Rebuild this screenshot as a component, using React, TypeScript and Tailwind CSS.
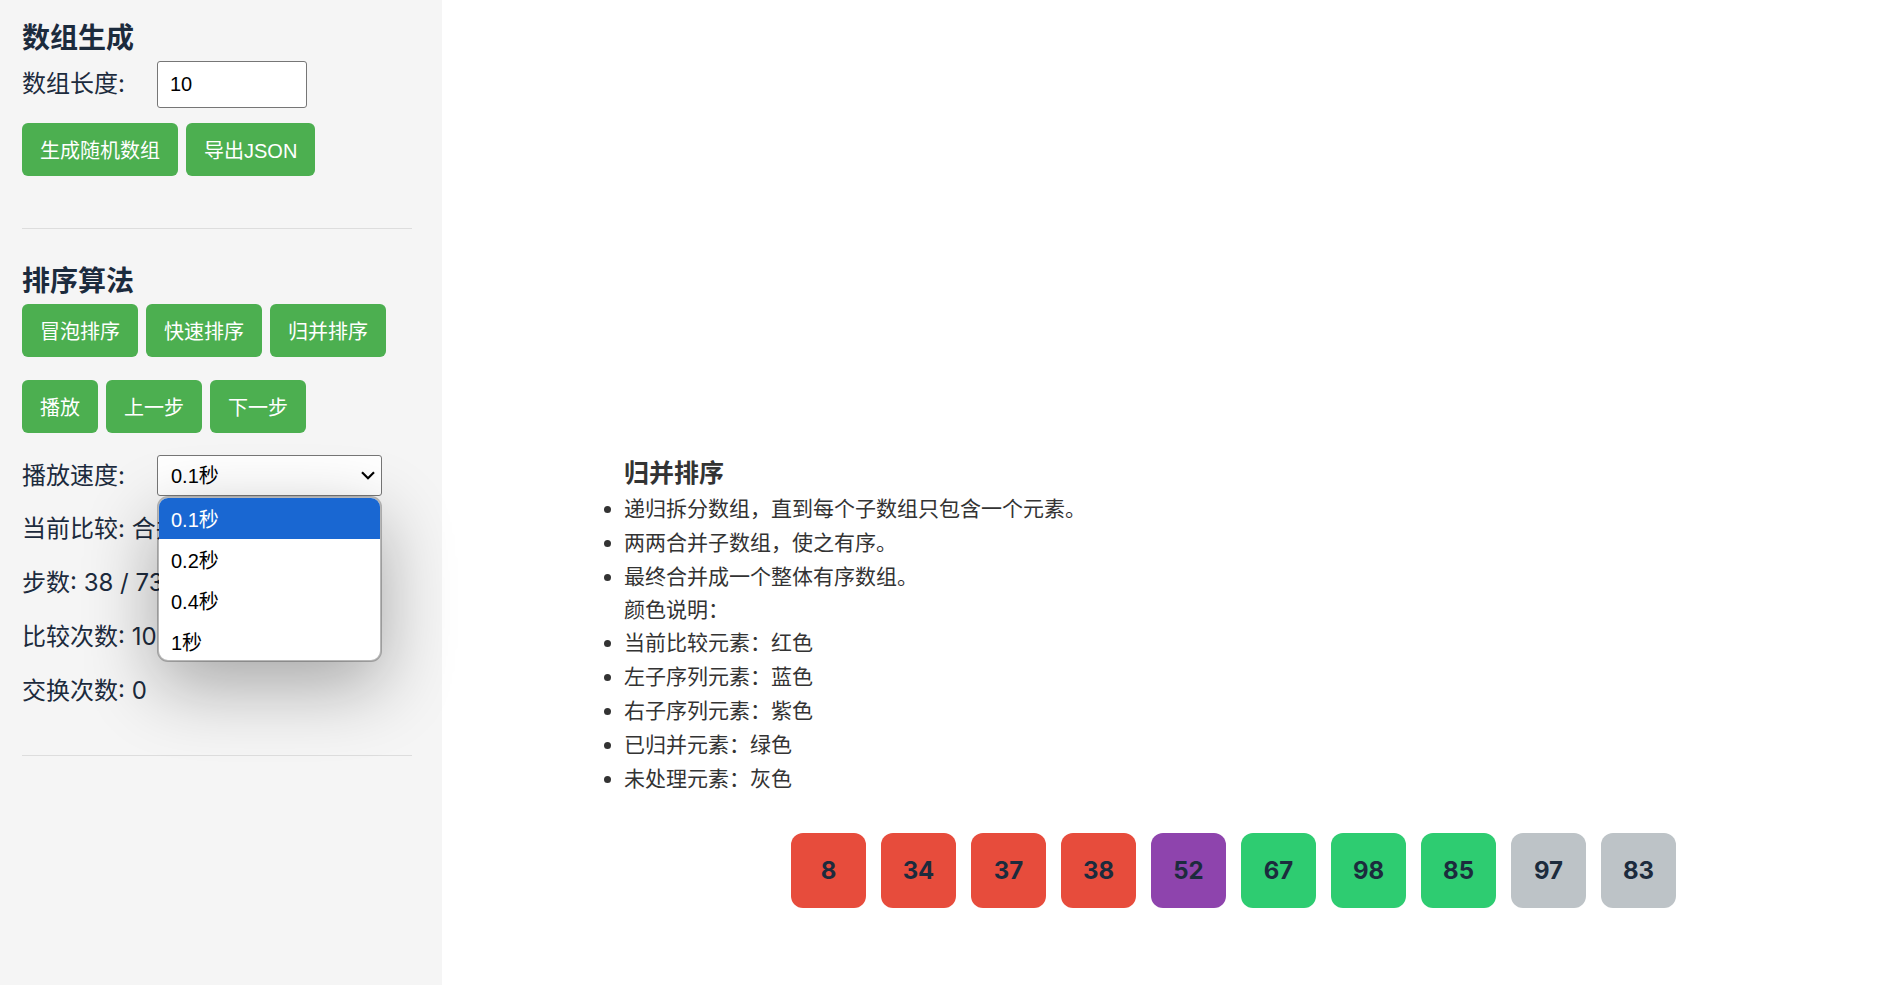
import { useState } from "react";
import type { ReactNode } from "react";

const speeds = ["0.1秒", "0.2秒", "0.4秒", "1秒"];

const steps = [
  "递归拆分数组，直到每个子数组只包含一个元素。",
  "两两合并子数组，使之有序。",
  "最终合并成一个整体有序数组。",
];

const legend = [
  "当前比较元素：红色",
  "左子序列元素：蓝色",
  "右子序列元素：紫色",
  "已归并元素：绿色",
  "未处理元素：灰色",
];

const stateColors = {
  comparing: "bg-[#e74c3c]",
  right: "bg-[#8e44ad]",
  merged: "bg-[#2ecc71]",
  idle: "bg-[#bdc3c7]",
};

const items: { value: number; state: keyof typeof stateColors }[] = [
  { value: 8, state: "comparing" },
  { value: 34, state: "comparing" },
  { value: 37, state: "comparing" },
  { value: 38, state: "comparing" },
  { value: 52, state: "right" },
  { value: 67, state: "merged" },
  { value: 98, state: "merged" },
  { value: 85, state: "merged" },
  { value: 97, state: "idle" },
  { value: 83, state: "idle" },
];

const controlFont = "font-['Liberation_Sans','Noto_Sans_CJK_SC',sans-serif]";

function ActionButton({ children }: { children: ReactNode }) {
  return (
    <button
      type="button"
      className={`${controlFont} h-[53px] rounded-md bg-[#4caf50] px-[18px] pt-[2px] text-xl text-white hover:bg-[#45a049]`}
    >
      {children}
    </button>
  );
}

function SpeedSelect() {
  const [speed, setSpeed] = useState(speeds[0]);
  return (
    <div className={`${controlFont} relative w-[225px] text-xl text-black`}>
      <select
        id="speed"
        value={speed}
        onChange={(e) => setSpeed(e.target.value)}
        className="block h-[41px] w-full appearance-none rounded-[3px] border border-[#767676] bg-white pl-[13px]"
      >
        {speeds.map((s) => (
          <option key={s}>{s}</option>
        ))}
      </select>
      <svg
        viewBox="0 0 14 9"
        className="pointer-events-none absolute top-4 right-[7px] h-[9px] w-[14px]"
        fill="none"
        stroke="black"
        strokeWidth="2.2"
      >
        <path d="M1 1.2 7 7.2 13 1.2" />
      </svg>
      <ul
        role="listbox"
        aria-label="播放速度"
        className="absolute top-full left-0 z-10 h-[166px] w-full overflow-hidden rounded-[11px] border-2 border-black/25 bg-white bg-clip-padding shadow-[0_24px_72px_rgba(0,0,0,0.32)]"
      >
        {speeds.map((s) => (
          <li
            key={s}
            role="option"
            aria-selected={s === speed}
            onClick={() => setSpeed(s)}
            className={`h-[41px] pl-3 leading-[44px] ${s === speed ? "bg-[#1967d2] text-white" : ""}`}
          >
            {s}
          </li>
        ))}
      </ul>
    </div>
  );
}

export default function App() {
  return (
    <div className="flex min-h-screen bg-white font-['Inter','Noto_Sans_CJK_SC',sans-serif] text-2xl text-[#1c2b3d]">
      <aside className="w-[442px] shrink-0 bg-[#f5f5f5] pr-[30px] pl-[22px]">
        <section className="border-b border-[#dddddd] pt-[15px] pb-[52px]">
          <h2 className="text-[28px] leading-[46px] font-bold">数组生成</h2>
          <div className="flex items-center">
            <label htmlFor="length" className="w-[135px] pb-[2px]">
              数组长度:
            </label>
            <input
              id="length"
              type="number"
              defaultValue={10}
              className={`${controlFont} h-[47px] w-[150px] rounded-[3px] border border-[#767676] bg-white px-3 text-xl text-black`}
            />
          </div>
          <div className="mt-[15px] flex gap-2">
            <ActionButton>生成随机数组</ActionButton>
            <ActionButton>导出JSON</ActionButton>
          </div>
        </section>

        <section className="border-b border-[#dddddd] pt-[29px] pb-[37px]">
          <h2 className="text-[28px] leading-[46px] font-bold">排序算法</h2>
          <div className="flex gap-2">
            <ActionButton>冒泡排序</ActionButton>
            <ActionButton>快速排序</ActionButton>
            <ActionButton>归并排序</ActionButton>
          </div>
          <div className="mt-[23px] flex gap-2">
            <ActionButton>播放</ActionButton>
            <ActionButton>上一步</ActionButton>
            <ActionButton>下一步</ActionButton>
          </div>
          <div className="mt-[22px] flex items-center">
            <label htmlFor="speed" className="w-[135px]">
              播放速度:
            </label>
            <SpeedSelect />
          </div>
          <div className="mt-[6px] leading-[54px]">
            <p>当前比较: 合并</p>
            <p>步数: 38 / 73</p>
            <p>比较次数: 10</p>
            <p>交换次数: 0</p>
          </div>
        </section>
      </aside>

      <main className="flex min-w-0 flex-1 flex-col justify-end pb-[77px] pl-[141px]">
        <div className="pl-[41px] text-[21px] leading-[34px] text-[#333333]">
          <h3 className="text-[25px] leading-[38px] font-bold">归并排序</h3>
          <ul className="list-disc">
            {steps.map((s) => (
              <li key={s}>{s}</li>
            ))}
          </ul>
          <p className="leading-[32px]">颜色说明：</p>
          <ul className="list-disc">
            {legend.map((s) => (
              <li key={s}>{s}</li>
            ))}
          </ul>
        </div>
        <div className="mt-[37px] flex justify-center gap-[15px]">
          {items.map((item) => (
            <div
              key={item.value}
              className={`flex size-[75px] items-center justify-center rounded-xl font-bold ${stateColors[item.state]}`}
            >
              {item.value}
            </div>
          ))}
        </div>
      </main>
    </div>
  );
}
